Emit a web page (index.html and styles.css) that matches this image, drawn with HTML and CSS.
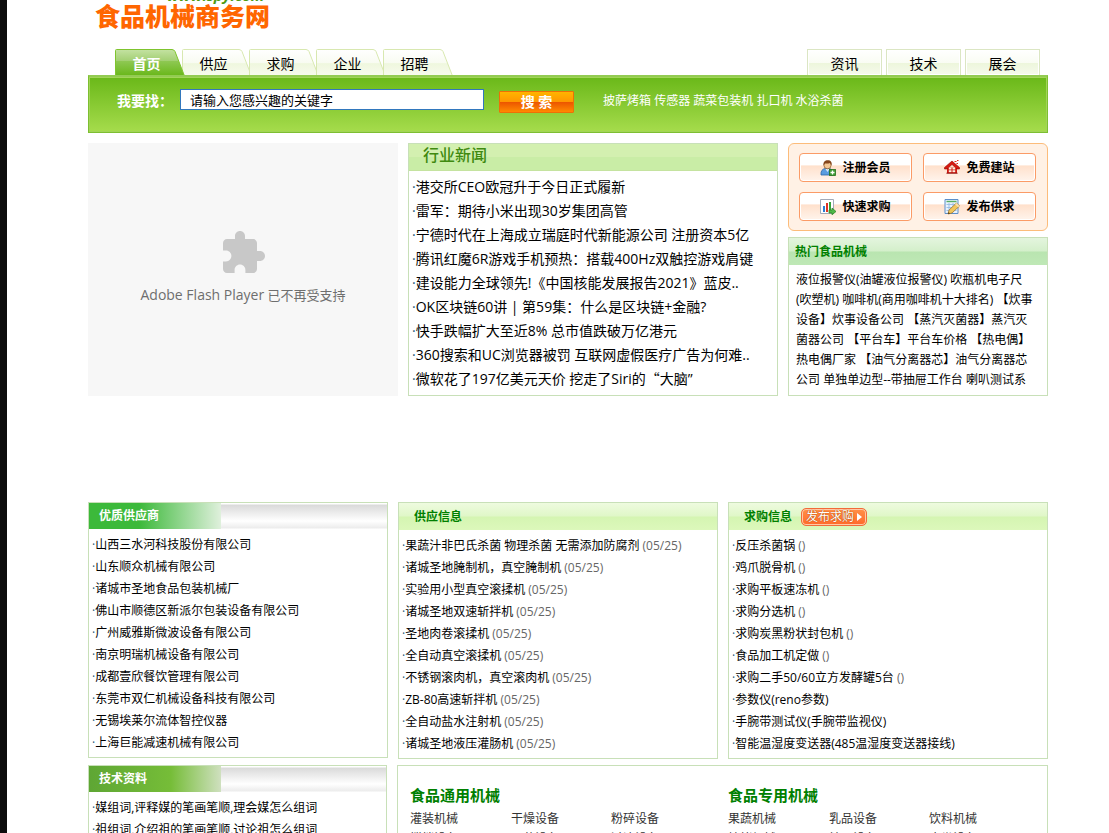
FILE: index.html
```html
<!DOCTYPE html>
<html lang="zh-CN">
<head>
<meta charset="utf-8">
<title>食品机械商务网</title>
<link rel="stylesheet" href="styles.css">
</head>
<body>
<div class="wrap">
  <header class="logo">
    <span class="logo-domain">www.spy.com</span>
    <h1 class="logo-name">食品机械商务网</h1>
  </header>

  <svg class="defs" width="0" height="0" aria-hidden="true">
    <defs>
      <linearGradient id="tabOn" x1="0" y1="0" x2="0" y2="1">
        <stop offset="0" stop-color="#c4e2a2"/><stop offset=".42" stop-color="#a4d074"/>
        <stop offset=".43" stop-color="#8fc854"/><stop offset="1" stop-color="#68b718"/>
      </linearGradient>
      <linearGradient id="tabOff" x1="0" y1="0" x2="0" y2="1">
        <stop offset="0" stop-color="#ffffff"/><stop offset=".52" stop-color="#f8fbf1"/>
        <stop offset=".53" stop-color="#eff7de"/><stop offset="1" stop-color="#f8fbee"/>
      </linearGradient>
    </defs>
  </svg>

  <nav class="tabs">
    <div class="tabs-main">
      <a class="tab tab-on" href="#"><svg class="tab-shape" viewBox="0 0 70 27"><path d="M.5 27V1.500Q.5.500 1.500.5H57Q59 .5 60 2.500L69.500 27" fill="url(#tabOn)" stroke="#7fc42e"/></svg><span>首页</span></a>
      <a class="tab" href="#"><svg class="tab-shape" viewBox="0 0 70 27"><path d="M.5 27V1.500Q.5.500 1.500.5H57Q59 .5 60 2.500L69.500 27" fill="url(#tabOff)" stroke="#d8e8b0"/></svg><span>供应</span></a>
      <a class="tab" href="#"><svg class="tab-shape" viewBox="0 0 70 27"><path d="M.5 27V1.500Q.5.500 1.500.5H57Q59 .5 60 2.500L69.500 27" fill="url(#tabOff)" stroke="#d8e8b0"/></svg><span>求购</span></a>
      <a class="tab" href="#"><svg class="tab-shape" viewBox="0 0 70 27"><path d="M.5 27V1.500Q.5.500 1.500.5H57Q59 .5 60 2.500L69.500 27" fill="url(#tabOff)" stroke="#d8e8b0"/></svg><span>企业</span></a>
      <a class="tab" href="#"><svg class="tab-shape" viewBox="0 0 70 27"><path d="M.5 27V1.500Q.5.500 1.500.5H57Q59 .5 60 2.500L69.500 27" fill="url(#tabOff)" stroke="#d8e8b0"/></svg><span>招聘</span></a>
    </div>
    <div class="tabs-side">
      <a class="side-tab" href="#">资讯</a>
      <a class="side-tab" href="#">技术</a>
      <a class="side-tab" href="#">展会</a>
    </div>
  </nav>

  <form class="search">
    <label class="search-label" for="q">我要找：</label>
    <input class="search-input" id="q" type="text" value="请输入您感兴趣的关键字">
    <button class="search-btn" type="button">搜 索</button>
    <div class="search-hot"><a href="#">披萨烤箱</a> <a href="#">传感器</a> <a href="#">蔬菜包装机</a> <a href="#">扎口机</a> <a href="#">水浴杀菌</a></div>
  </form>

  <main>
    <div class="row row-top">
      <div class="flash">
        <svg width="48" height="48" viewBox="0 0 24 24" aria-hidden="true"><path fill="#c8c8c8" d="M20.500 11H19V7c0-1.100-.9-2-2-2h-4V3.500C13 2.120 11.880 1 10.500 1S8 2.120 8 3.500V5H4c-1.100 0-1.990.9-1.990 2v3.800H3.500c1.490 0 2.700 1.210 2.700 2.700s-1.210 2.700-2.700 2.700H2V20c0 1.100.9 2 2 2h3.800v-1.500c0-1.490 1.210-2.700 2.700-2.700 1.490 0 2.700 1.210 2.700 2.700V22H17c1.100 0 2-.9 2-2v-4h1.500c1.380 0 2.500-1.120 2.500-2.500S21.880 11 20.500 11z"/></svg>
        <p><span class="flash-name">Adobe Flash Player</span> 已不再受支持</p>
      </div>

      <section class="box news">
        <h2 class="news-title">行业新闻</h2>
        <ul class="list news-list">
          <li><a href="#">港交所CEO欧冠升于今日正式履新</a></li>
          <li><a href="#">雷军：期待小米出现30岁集团高管</a></li>
          <li><a href="#">宁德时代在上海成立瑞庭时代新能源公司 注册资本5亿</a></li>
          <li><a href="#">腾讯红魔6R游戏手机预热：搭载400Hz双触控游戏肩键</a></li>
          <li><a href="#">建设能力全球领先!《中国核能发展报告2021》蓝皮..</a></li>
          <li><a href="#">OK区块链60讲 | 第59集：什么是区块链+金融?</a></li>
          <li><a href="#">快手跌幅扩大至近8% 总市值跌破万亿港元</a></li>
          <li><a href="#">360搜索和UC浏览器被罚 互联网虚假医疗广告为何难..</a></li>
          <li><a href="#">微软花了197亿美元天价 挖走了Siri的<span class="cjk">“</span>大脑”</a></li>
        </ul>
      </section>

      <div class="side">
        <div class="actions">
          <a class="action" href="#">
            <svg width="16" height="16" viewBox="0 0 16 16" aria-hidden="true"><path d="M1 15c-.5-4 1.500-6 4-6.500h4.500c2.500.5 3.500 2.500 3.500 6.500z" fill="#5a9de0" stroke="#2e68a8" stroke-width=".8"/><path d="M5.500 9l2 3 2-3z" fill="#dcebfa"/><circle cx="7.500" cy="5.200" r="3.600" fill="#f3c795" stroke="#8a5527" stroke-width=".7"/><path d="M3.500 5.500C3 2 5 .3 7.800.3c3 0 4.500 2 3.800 5.200-.7-1.200-1-2-1.600-2.600-2 .8-4 .4-5 .6-.8.500-.9 1.200-1.500 2z" fill="#84451b"/><rect x="9.500" y="9.500" width="6" height="6" fill="#3f9c35" stroke="#23701d" stroke-width=".8"/><path d="M12.500 10.500v4M10.500 12.500h4" stroke="#fff" stroke-width="1.300"/></svg>注册会员</a>
          <a class="action" href="#">
            <svg width="16" height="16" viewBox="0 0 16 16" aria-hidden="true"><path d="M3 7.500h10V13H3z" fill="#cf1a12"/><path d="M8 1L.5 7.500V9H3l5-4.500L13 9h2.500V7.500z" fill="#d81810" stroke="#8f0805" stroke-width=".6"/><path d="M4.800 7.500h2.700v2H4.800zM8.500 7.500h2.700v2H8.500zM4.800 10.300h2.700v2H4.800zM8.500 10.300h2.700v2H8.500z" fill="#fff0df"/><path d="M2.500 13.200h11" stroke="#8f0805"/><path d="M10.500 1.500h2M12.500 3.500h1.500M13 .5h1.500" stroke="#e2271b"/></svg>免费建站</a>
          <a class="action" href="#">
            <svg width="16" height="16" viewBox="0 0 16 16" aria-hidden="true"><path d="M.5.500h13v14H.5z" fill="#fff" stroke="#a3aab8"/><path d="M3 7h2v6H3z" fill="#2b7ed4"/><path d="M6 4h2v9H6z" fill="#df3423"/><path d="M9 3h2v8H9z" fill="#36a33a"/><path d="M9 11h3V9l4 3.500-4 3.300V14H9z" fill="#4fb848" stroke="#24801f" stroke-width=".7"/></svg>快速求购</a>
          <a class="action" href="#">
            <svg width="16" height="16" viewBox="0 0 16 16" aria-hidden="true"><path d="M1 .5h13v14H1z" fill="#e8f2fc" stroke="#5c8fca"/><path d="M2.500 2.500h10" stroke="#57ad62" stroke-width="1.400"/><path d="M2.500 5.500h10M2.500 8.500h10M2.500 11.500h10M5 4v9M9 4v9" stroke="#96bbe4" stroke-width=".9"/><path d="M4 15l1-4 7.500-7 3 3L8 14z" fill="#f2c65c" stroke="#9a6a1c" stroke-width=".7"/><path d="M12.500 4l3 3-1.500 1.300-3-3z" fill="#f6dfab"/><path d="M4 15l.6-2L6 14.400z" fill="#4b3515"/></svg>发布供求</a>
        </div>
        <section class="box hot">
          <h2 class="hot-title">热门食品机械</h2>
          <p class="hot-text"><a href="#">液位报警仪(油罐液位报警仪)</a> <a href="#">吹瓶机电子尺<br>(吹塑机)</a> <a href="#">咖啡机(商用咖啡机十大排名)</a> <a href="#">【炊事<br>设备】炊事设备公司</a> <a href="#">【蒸汽灭菌器】蒸汽灭<br>菌器公司</a> <a href="#">【平台车】平台车价格</a> <a href="#">【热电偶】<br>热电偶厂家</a> <a href="#">【油气分离器芯】油气分离器芯<br>公司</a> <a href="#">单独单边型--带抽屉工作台</a> <a href="#">喇叭测试系</a></p>
        </section>
      </div>
    </div>

    <div class="row row-lists">
      <section class="box">
        <div class="ribbon"><h2 class="ribbon-title">优质供应商</h2></div>
        <ul class="list">
          <li><a href="#">山西三水河科技股份有限公司</a></li>
          <li><a href="#">山东顺众机械有限公司</a></li>
          <li><a href="#">诸城市圣地食品包装机械厂</a></li>
          <li><a href="#">佛山市顺德区新派尔包装设备有限公司</a></li>
          <li><a href="#">广州威雅斯微波设备有限公司</a></li>
          <li><a href="#">南京明瑞机械设备有限公司</a></li>
          <li><a href="#">成都壹欣餐饮管理有限公司</a></li>
          <li><a href="#">东莞市双仁机械设备科技有限公司</a></li>
          <li><a href="#">无锡埃莱尔流体智控仪器</a></li>
          <li><a href="#">上海巨能减速机械有限公司</a></li>
        </ul>
      </section>
      <section class="box">
        <div class="bar"><h2>供应信息</h2></div>
        <ul class="list">
          <li><a href="#">果蔬汁非巴氏杀菌 物理杀菌 无需添加防腐剂</a> <span>(05/25)</span></li>
          <li><a href="#">诸城圣地腌制机，真空腌制机</a> <span>(05/25)</span></li>
          <li><a href="#">实验用小型真空滚揉机</a> <span>(05/25)</span></li>
          <li><a href="#">诸城圣地双速斩拌机</a> <span>(05/25)</span></li>
          <li><a href="#">圣地肉卷滚揉机</a> <span>(05/25)</span></li>
          <li><a href="#">全自动真空滚揉机</a> <span>(05/25)</span></li>
          <li><a href="#">不锈钢滚肉机，真空滚肉机</a> <span>(05/25)</span></li>
          <li><a href="#">ZB-80高速斩拌机</a> <span>(05/25)</span></li>
          <li><a href="#">全自动盐水注射机</a> <span>(05/25)</span></li>
          <li><a href="#">诸城圣地液压灌肠机</a> <span>(05/25)</span></li>
        </ul>
      </section>
      <section class="box">
        <div class="bar"><h2>求购信息</h2><a class="post" href="#">发布求购<svg width="5" height="8" viewBox="0 0 5 8" aria-hidden="true"><path d="M0 0l5 4-5 4z" fill="#fff"/></svg></a></div>
        <ul class="list">
          <li><a href="#">反压杀菌锅</a> <span>()</span></li>
          <li><a href="#">鸡爪脱骨机</a> <span>()</span></li>
          <li><a href="#">求购平板速冻机</a> <span>()</span></li>
          <li><a href="#">求购分选机</a> <span>()</span></li>
          <li><a href="#">求购炭黑粉状封包机</a> <span>()</span></li>
          <li><a href="#">食品加工机定做</a> <span>()</span></li>
          <li><a href="#">求购二手50/60立方发酵罐5台</a> <span>()</span></li>
          <li><a href="#">参数仪(reno参数)</a></li>
          <li><a href="#">手腕带测试仪(手腕带监视仪)</a></li>
          <li><a href="#">智能温湿度变送器(485温湿度变送器接线)</a></li>
        </ul>
      </section>
    </div>

    <div class="row row-bottom">
      <section class="box">
        <div class="ribbon"><h2 class="ribbon-title ribbon-olive">技术资料</h2></div>
        <ul class="list">
          <li><a href="#">媒组词,评释媒的笔画笔顺,理会媒怎么组词</a></li>
          <li><a href="#">祖组词,介绍祖的笔画笔顺,讨论祖怎么组词</a></li>
        </ul>
      </section>
      <div class="box cats">
        <section>
          <h2>食品通用机械</h2>
          <div class="cat-links"><a href="#">灌装机械</a><a href="#">干燥设备</a><a href="#">粉碎设备</a><a href="#">搅拌设备</a><a href="#">灭菌设备</a><a href="#">过滤设备</a></div>
        </section>
        <section>
          <h2>食品专用机械</h2>
          <div class="cat-links"><a href="#">果蔬机械</a><a href="#">乳品设备</a><a href="#">饮料机械</a><a href="#">焙烤机械</a><a href="#">糖果设备</a><a href="#">肉类设备</a></div>
        </section>
      </div>
    </div>
  </main>
</div>
</body>
</html>
```
FILE: styles.css
```css
* { box-sizing: border-box; }
html { height: 100%; overflow: hidden; }
body {
  margin: 0;
  min-height: 100vh;
  padding-left: 20px;
  border-left: 7px solid #0c0c0c;
  background: #fff;
  color: #000;
  font: 12px/22px "Open Sans", "Noto Sans CJK SC", sans-serif;
}
h1, h2, p, ul { margin: 0; padding: 0; font-size: 12px; }
p { font-weight: normal; }
ul { list-style: none; }
a { color: inherit; text-decoration: none; }
svg { flex: none; }
.defs { position: absolute; }
.wrap { max-width: 960px; margin: 0 auto; }
.cjk { font-family: "Noto Sans CJK SC", sans-serif; line-height: 1; }

/* logo */
.logo { height: 49px; padding-left: 7px; overflow: hidden; }
.logo-domain {
  display: flex;
  align-items: flex-end;
  height: 3px;
  margin-left: 72px;
  color: #4d9a12;
  font: italic bold 15px/16px "Open Sans", sans-serif;
}
.logo-name { color: #f60; font-size: 25px; line-height: 27px; font-weight: 900; }

/* tabs */
.tabs { display: flex; justify-content: space-between; height: 26px; padding: 0 8px 0 27px; }
.tabs-main { display: flex; }
.tab {
  position: relative;
  width: 67px;
  height: 26px;
  padding: 3px 4px 0 0;
  font-size: 14px;
  line-height: 24px;
  text-align: center;
}
.tab-shape { position: absolute; left: 0; top: 0; width: 70px; height: 27px; }
.tab span { position: relative; }
.tab-on { z-index: 1; color: #fff; font-weight: bold; }
.tabs-side { display: flex; gap: 4px; }
.side-tab {
  width: 75px;
  padding-top: 2px;
  border: 1px solid #dbe6c3;
  border-bottom: 0;
  box-shadow: inset 0 0 0 1px #fff;
  background: linear-gradient(#fff 0, #f9fcf3 52%, #edf6dc 53%, #f6faec 100%);
  font-size: 14px;
  line-height: 24px;
  text-align: center;
}

/* search */
.search {
  position: relative;
  z-index: 2;
  display: flex;
  align-items: flex-start;
  height: 58px;
  padding: 12px 0 0 28px;
  border: 1px solid #7dbf31;
  border-top: 2px solid #93cb52;
  box-shadow: inset 0 0 0 1px #a2d458;
  background: linear-gradient(#6ab819, #a6dc4c);
  color: #fff;
}
.search-label { width: 63px; font-size: 14px; line-height: 24px; font-weight: bold; }
.search-input {
  width: 304px;
  height: 21px;
  padding: 0 9px;
  border: 1px solid #3277bd;
  background: #fff;
  color: #000;
  font: 13px/19px "Open Sans", "Noto Sans CJK SC", sans-serif;
}
.search-btn {
  width: 75px;
  height: 22px;
  margin: 2px 29px 0 15px;
  padding: 0;
  border: 1px solid #ed7006;
  border-radius: 1px;
  background: linear-gradient(#ffb400 0, #ff9600 50%, #ec5500 51%, #ff8a00 100%);
  color: #fff;
  font: bold 14px/18px "Open Sans", "Noto Sans CJK SC", sans-serif;
}
.search-hot { line-height: 24px; }

/* shared boxes */
.row { display: grid; gap: 10px; align-items: start; }
.box { border: 1px solid #c8e0b8; background: #fff; }
.list { padding: 5px 3px 3px; white-space: nowrap; overflow: hidden; }
.list li::before { content: "·"; color: #245a78; }
.list span:not(.cjk) { color: #666; }

/* top row */
.row-top { grid-template-columns: 31fr 37fr 26fr; align-items: stretch; margin: 10px 0 106px; }
.flash {
  display: flex;
  flex-direction: column;
  align-items: center;
  justify-content: center;
  gap: 7px;
  padding-bottom: 5px;
  background: #f7f7f7;
  color: #6e6e6e;
}
.flash p { font-size: 13px; }
.flash-name { font-size: 14px; }
.news-title {
  height: 27px;
  padding-left: 14px;
  border-bottom: 1px solid #c5e3a0;
  background: linear-gradient(#d3f0b0 50%, #c9eda6 50%);
  color: #3f8a10;
  font-size: 16px;
  line-height: 23px;
  font-weight: 500;
}
.news-list { padding: 4px 3px; font-size: 14px; line-height: 24px; }
.side { display: flex; flex-direction: column; gap: 6px; }
.actions {
  display: grid;
  grid-template-columns: 1fr 1fr;
  gap: 10px 11px;
  padding: 9px 11px 9px 10px;
  border: 1px solid #fcbc7a;
  border-radius: 6px;
  background: #fff1e5;
}
.action {
  display: flex;
  align-items: center;
  justify-content: center;
  gap: 6px;
  height: 29px;
  border: 1px solid #fb9b66;
  border-radius: 4px;
  box-shadow: inset 0 0 0 1px #fff;
  background: linear-gradient(#fff 42%, #ffe0cb 43%, #fff4ec 100%);
  font-weight: bold;
}
.hot { flex: 1; }
.hot-title {
  height: 27px;
  padding-left: 6px;
  background: linear-gradient(#e4f5de 0, #d4efcb 48%, #b9e5b0 52%, #bfe8b6 100%);
  color: #008000;
  line-height: 27px;
}
.hot-text { padding: 5px 0 4px 7px; line-height: 20px; white-space: nowrap; overflow: hidden; }

/* list columns */
.row-lists { grid-template-columns: 30fr 32fr 32fr; }
.ribbon { height: 26px; background: linear-gradient(#fff 1px, #dadada 2px, #fff 18px, #ececec 25px, #fff 26px); }
.ribbon-title {
  width: 132px;
  padding-left: 10px;
  background: linear-gradient(90deg, #3cb93a 38%, #dff0dc);
  color: #fff;
  line-height: 26px;
}
.ribbon-olive { background: linear-gradient(90deg, #5ea634, #76bd38 62%, #cfe0bf); }
.bar {
  display: flex;
  align-items: center;
  gap: 9px;
  height: 27px;
  padding-left: 15px;
  background: linear-gradient(#eefbdf 0, #e0f7c8 48%, #d5f5b2 52%, #dcf8bb 100%);
}
.bar h2 { color: #008000; }
.post {
  display: flex;
  align-items: center;
  gap: 3px;
  height: 18px;
  padding: 0 4px;
  border: 1px solid #f26a3a;
  border-radius: 5px;
  box-shadow: inset 0 0 0 1px #ffc9a6;
  background: linear-gradient(#ff9048, #ff6a2a);
  color: #fff;
  line-height: 16px;
  text-shadow: 0 0 1px #b04a00, 0 0 1px #b04a00;
}

/* bottom row */
.row-bottom { grid-template-columns: 299fr 651fr; margin-top: 6px; }
.cats { display: grid; grid-template-columns: 318fr 319fr; padding: 17px 0 8px 12px; }
.cats h2 { margin-bottom: 2px; color: #008000; font-size: 15px; line-height: 24px; }
.cat-links { display: grid; grid-template-columns: 101px 100px 100px; color: #333; line-height: 20px; }
```
